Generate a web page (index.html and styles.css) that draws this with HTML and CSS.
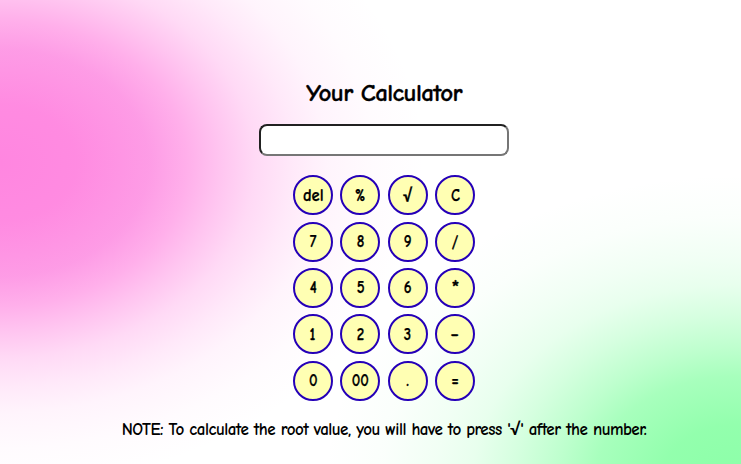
FILE: index.html
```html
<!DOCTYPE html>
<html lang="en">
<head>
<meta charset="utf-8">
<title>Your Calculator</title>
<link rel="stylesheet" href="styles.css">
</head>
<body>
<main class="calculator">
<h1 class="title">Your Calculator</h1>
<input class="display" type="text" aria-label="Result">
<div class="keys">
<button class="key"><span class="label word">del</span></button><button class="key"><span class="label">%</span></button><button class="key"><span class="label">√</span></button><button class="key"><span class="label">C</span></button>
<button class="key"><span class="label">7</span></button><button class="key"><span class="label">8</span></button><button class="key"><span class="label">9</span></button><button class="key"><span class="label">/</span></button>
<button class="key"><span class="label">4</span></button><button class="key"><span class="label">5</span></button><button class="key"><span class="label">6</span></button><button class="key"><span class="label star">*</span></button>
<button class="key"><span class="label">1</span></button><button class="key"><span class="label">2</span></button><button class="key"><span class="label">3</span></button><button class="key"><span class="label dash">-</span></button>
<button class="key"><span class="label">0</span></button><button class="key"><span class="label">00</span></button><button class="key"><span class="label">.</span></button><button class="key"><span class="label word">=</span></button>
</div>
<p class="note">NOTE: To calculate the root value, you will have to press '√' after the number.</p>
</main>
</body>
</html>
```
FILE: styles.css
```css
* { box-sizing: border-box; }
body {
  margin: 0;
  height: 464px;
  overflow: hidden;
  color: #000;
  font-family: "Comic Neue", "Lato", sans-serif;
  background:
    radial-gradient(ellipse 425px 325px at 0 163px, #ff86e0 0%, rgba(255,134,224,.96) 18%, rgba(253,134,224,.82) 35%, rgba(255,134,224,.66) 44%, rgba(255,134,224,.48) 52%, rgba(255,134,224,.31) 60%, rgba(255,134,224,.18) 69%, rgba(255,134,224,.09) 77%, rgba(255,134,224,.03) 88%, rgba(255,134,224,0) 100%),
    radial-gradient(ellipse 410px 305px at 735px 480px, #8cffa8 0%, rgba(140,255,168,.94) 18%, rgba(140,255,168,.76) 34%, rgba(140,255,168,.57) 43%, rgba(140,255,168,.36) 54%, rgba(140,255,168,.2) 64%, rgba(140,255,168,.12) 73%, rgba(140,255,168,.04) 86%, rgba(140,255,168,0) 100%),
    #fff;
}
.calculator {
  display: flex;
  flex-direction: column;
  align-items: center;
  padding: 78px 0 0 27px;
}
.title {
  margin: 0;
  font-size: 25px;
  line-height: 30px;
  font-weight: 700;
  letter-spacing: -.65px;
  -webkit-text-stroke: .3px #000;
}
.display {
  width: 250px;
  height: 32px;
  margin: 16px 0 19.2px;
  padding: 2px 8px;
  border: 2px solid;
  border-color: #212121 #767676 #767676 #212121;
  border-radius: 8px;
  background: #fff;
  font: 16px "Comic Neue", "Lato", sans-serif;
}
.keys {
  display: grid;
  grid-template-columns: repeat(4, 40px);
  gap: 6.4px 7.4px;
}
.key {
  width: 40px;
  height: 40px;
  padding: 0;
  border: 2px solid #2500b8;
  border-radius: 50%;
  background: #ffffb3;
  color: #000;
  font: 700 18px "Comic Neue", "Lato", sans-serif;
  -webkit-text-stroke: .25px #000;
}
.label {
  display: inline-block;
  transform: scaleX(.83);
}
.word { transform: scaleX(.92); }
.dash { transform: scaleX(1.2); }
.star { transform: scale(1.15); }
.note {
  margin: 17.8px 0 0;
  font-size: 17px;
  line-height: 22px;
  font-weight: 700;
  letter-spacing: -.52px;
  white-space: nowrap;
}
```
